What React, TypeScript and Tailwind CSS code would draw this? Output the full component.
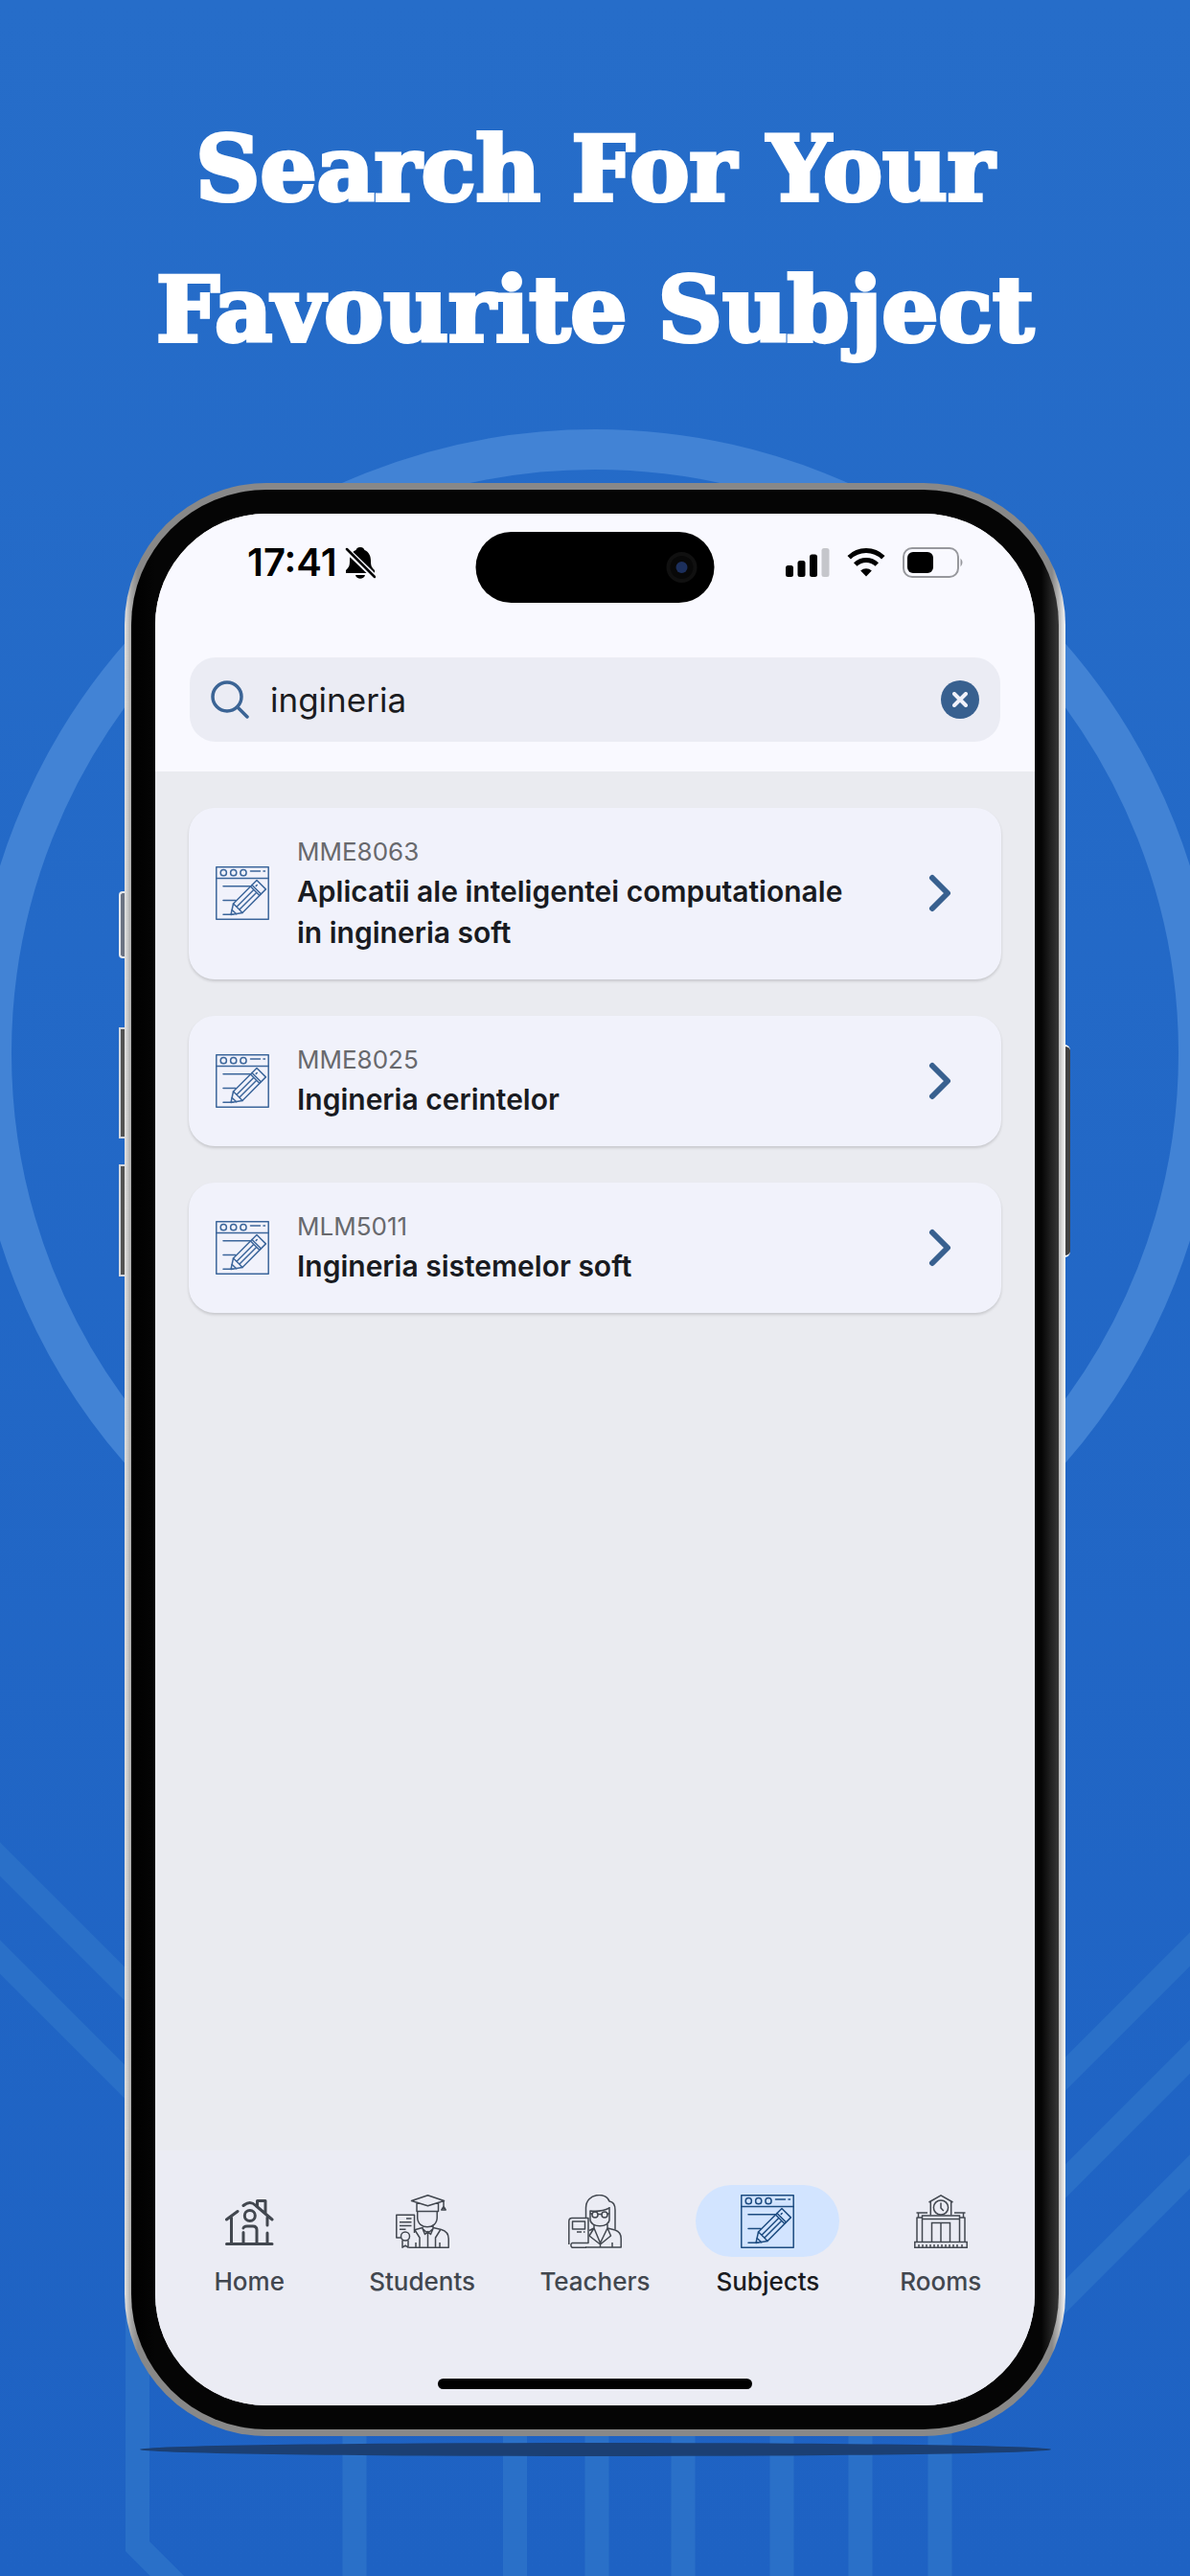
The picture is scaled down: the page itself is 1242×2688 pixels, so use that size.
import React from "react";

type IconProps = { className?: string };

const subjects = [
  { code: "MME8063", title: "Aplicatii ale inteligentei computationale in ingineria soft" },
  { code: "MME8025", title: "Ingineria cerintelor" },
  { code: "MLM5011", title: "Ingineria sistemelor soft" },
];

function SubjectIcon({ className }: IconProps) {
  return (
    <svg viewBox="0 0 56 56" className={className} fill="none" stroke="currentColor" strokeWidth="1.5" strokeLinecap="round" aria-hidden="true">
      <path d="M.8.8h54.4v54.4H.8z" strokeLinejoin="round" />
      <path d="M.8 12.5h54.4" />
      <circle cx="8.3" cy="6.7" r="3.1" />
      <circle cx="18.7" cy="6.7" r="3.1" />
      <circle cx="29" cy="6.7" r="3.1" />
      <path d="M36.5 5h10M50 5h1.5M8 20.7h28M8 35.5h13M8 50.3h10" />
      <path d="M43 14.5l9.4 9.4L28 48.5 16 50.5 18.5 39z" strokeLinejoin="round" />
      <path d="M36.5 21l9.2 9.2M38 19.500l9.300 9.300M39.500 24.800L22 42.300M42.300 27.800L25 45M18.500 39l3.200 3 3 3 3.300 3.500M17.200 45.500l4.500 4.300M42.300 20.400l.9-.9" />
    </svg>
  );
}

function HomeIcon({ className }: IconProps) {
  return (
    <svg viewBox="0 0 56 56" className={className} fill="none" stroke="currentColor" strokeWidth="3" strokeLinecap="round" strokeLinejoin="round" aria-hidden="true">
      <path d="M4.500 51.500h47.500M9.500 50V24M4.500 26l11.500-8.500M22 11.500q7-6 13 0l17 14.500M47 24v8M47 40v11M36.500 12V6.500h8.500V19" />
      <circle cx="28.800" cy="22" r="5.500" />
      <path d="M22 50V39.500M22 35q.5-2 4-2h6q4 0 4 4v13" />
    </svg>
  );
}

function StudentIcon({ className }: IconProps) {
  return (
    <svg viewBox="0 0 56 56" className={className} fill="none" stroke="currentColor" strokeWidth="1.5" strokeLinejoin="round" aria-hidden="true">
      <path d="M16.500 6.500l17-5.800 17 5.800-17 5.300zM22 8.500v9h22.500v-9M50 6.500v6M50 12.500l-2.200 3.500h4.400z" />
      <path d="M22.700 17.500v6.500c0 13 20.500 13 20.500 0v-6.500M28 32.500v3l5.500 5 5.500-5v-3M28 35.500l2.500 6 3-3 3 3 2.500-6" />
      <path d="M28 34.500l-9 2.500M39 34.500l8.500 2c5 1.500 7.700 5 7.700 9.500v9.200H13.500M20 37l5 8v10M46.500 37l-5 8v10M33.500 40.500V55M46 50v5M21 50v5" />
      <path d="M5.500 45H.8V21.200h18.700V40M11 25h5.500M4 28.800h12.500M4 32.600h12.500M4 36.300h6.500" />
      <circle cx="10" cy="43.500" r="4.500" />
      <path d="M7 47.500v7.700l3-2 3 2v-7.700" />
    </svg>
  );
}

function TeacherIcon({ className }: IconProps) {
  return (
    <svg viewBox="0 0 56 56" className={className} fill="none" stroke="currentColor" strokeWidth="1.500" strokeLinejoin="round" aria-hidden="true">
      <path d="M18.500 24V14C18.500-2 40-3 43 7c4 .5 6 4 6 9v20.500M23 24v-7c8 1 14 0 20-3M43 13v13c0 9-20 9-20 0v-9" />
      <circle cx="28" cy="21" r="3" />
      <circle cx="38" cy="21" r="3" />
      <path d="M31 20.500h4M25 20.500l-2-1M41 20.500l2-1M27 31v4l6.500 15.500L41 35v-4M41 35l8 2c4.500 1.500 6.200 5 6.200 9v9H18M27 35l-5 2.500M27 35l-5 8 11.500 9 11-9L41 35M33.500 50v5M46 50v5" />
      <path d="M4 24.500h17v26H4a3 3 0 0 0 0 4.700h15M4 24.500Q.8 24.500.8 28v24M4.500 28h13v8h-13zM9 39h5M16 39h1.500" />
    </svg>
  );
}

function RoomsIcon({ className }: IconProps) {
  return (
    <svg viewBox="0 0 56 56" className={className} fill="none" stroke="currentColor" strokeWidth="1.500" aria-hidden="true">
      <path d="M15.500 8L28 .9 40.500 8M17.300 7v14.500M38.700 7v14.500" />
      <circle cx="28" cy="13.500" r="7.600" />
      <path d="M28 8.500v5.500l2.800 3" />
      <path d="M2.500 19h11.500M42 19h11.500M4.500 19v4.500M51.500 19v4.500M8.500 22h39v3.500h-39zM2.500 24h6M47.500 24h6M3 24v25M8.500 25.500V49M53 24v25M47.500 25.500V49" />
      <path d="M18.500 49V29.500h19V49M28 29.500V49M.8 49.500h54.400v5.700H.8z" />
      <path d="M5 52v3M9 52v3M13 52v3M17 52v3M21 52v3M25 52v3M29 52v3M33 52v3M37 52v3M41 52v3M45 52v3M50 52v3" />
    </svg>
  );
}

const tabs = [
  { label: "Home", Icon: HomeIcon },
  { label: "Students", Icon: StudentIcon },
  { label: "Teachers", Icon: TeacherIcon },
  { label: "Subjects", Icon: SubjectIcon, active: true },
  { label: "Rooms", Icon: RoomsIcon },
];

function Backdrop() {
  return (
    <svg viewBox="0 0 1242 2688" preserveAspectRatio="xMidYMin slice" className="absolute inset-0 h-full w-full" fill="none" aria-hidden="true">
      <circle cx="621" cy="1099" r="630" stroke="#4283d5" strokeWidth="42" />
      <g stroke="#2a70c8" strokeWidth="25">
        <path d="M-20 1920L180 2120M-20 2022L180 2222" />
        <path d="M1262 2014L1062 2214M1262 2126L1062 2326M1262 2246L1062 2446" />
        <path d="M143.500 2400v257l60 60M370 2500v200M537.500 2500v200M623 2500v200M713 2500v200M816 2500v200M898 2500v200M981 2500v200" />
      </g>
    </svg>
  );
}

function StatusBar() {
  return (
    <div className="flex h-[150px] items-start justify-between pt-[19px] pr-[73px] pl-24">
      <div className="flex h-16 items-center gap-2 text-[40px] leading-none font-semibold text-black">
        <span>17:41</span>
        <svg viewBox="0 0 32 34" className="h-[34px] w-8" aria-hidden="true">
          <path fill="#000" d="M16 1c3 0 4 1.500 4.500 3C25 6 27 10 27 15c0 6 1 7 4 10v3H1v-3c3-3 4-4 4-10 0-5 2-9 6.500-11C12 2.500 13 1 16 1zM11 30h10c-1 5-9 5-10 0z" />
          <path stroke="#f9f9ff" strokeWidth="6" d="M1 3l30 29" />
          <path stroke="#000" strokeWidth="2.500" strokeLinecap="round" d="M2 3l29 29" />
        </svg>
      </div>
      <div className="flex h-16 items-center gap-[18px]">
        <svg viewBox="0 0 46 30" className="h-[30px] w-[46px]" aria-hidden="true">
          <rect x="0" y="18" width="8" height="12" rx="2.500" />
          <rect x="12.500" y="13" width="8" height="17" rx="2.500" />
          <rect x="25" y="6.500" width="8" height="23.500" rx="2.500" />
          <rect x="37.500" y="0" width="8" height="30" rx="2.500" fill="#c5c6cb" />
        </svg>
        <svg viewBox="0 0 40 30" className="h-[30px] w-10" fill="none" stroke="#000" strokeWidth="5" aria-hidden="true">
          <path d="M2.200 9.800a25.500 25.500 0 0 1 35.600 0M8.700 17a16.500 16.500 0 0 1 22.600 0" />
          <path d="M20 29.500l-5.800-6a8.500 8.500 0 0 1 11.600 0z" fill="#000" stroke="none" />
        </svg>
        <svg viewBox="0 0 65 32" className="h-8 w-[65px]" aria-hidden="true">
          <rect x="1" y="1" width="57" height="30" rx="9" fill="none" stroke="#97989d" strokeWidth="2" />
          <rect x="5" y="5" width="27" height="22" rx="6" />
          <path d="M60.500 11.500q4 4.500 0 9z" fill="#97989d" />
        </svg>
      </div>
    </div>
  );
}

export default function App() {
  return (
    <main className="relative flex min-h-screen flex-col items-center overflow-hidden bg-linear-to-b from-[#266dc9] to-[#1e62c3] pt-[103px] font-['Inter','Noto_Sans',sans-serif]">
      <Backdrop />
      <h1 className="relative text-center font-['DejaVu_Serif',serif] text-[93px] leading-[147px] font-bold text-white [-webkit-text-stroke:4px_white]">
        Search For Your
        <br />
        Favourite Subject
      </h1>

      <div className="relative mt-[107px] w-full max-w-[982px]">
        <div className="absolute top-[426px] -left-[6px] h-[70px] w-2 rounded-l-sm border-2 border-r-0 border-gray-200 bg-gray-500" />
        <div className="absolute top-[568px] -left-[6px] h-[116px] w-2 border-2 border-r-0 border-gray-300 bg-neutral-600" />
        <div className="absolute top-[711px] -left-[6px] h-[117px] w-2 border-2 border-r-0 border-gray-300 bg-neutral-600" />
        <div className="absolute top-[586px] -right-[5px] h-[222px] w-2 rounded-r-md border-y-2 border-white bg-neutral-700" />

        <div className="relative rounded-[148px] bg-[linear-gradient(to_right,#e4e4e4,#a8a8a8_7px,#888888_14px,#888888_calc(100%-14px),#b8b8b8_calc(100%-7px),#f8f8f8)] p-[7px]">
          <div className="rounded-[141px] bg-[linear-gradient(to_right,#000000,#050505_25px,#050505_calc(100%-18px),#383838)] p-[25px]">
            <div className="relative flex min-h-[1974px] flex-col overflow-hidden rounded-[116px] bg-[#eaebf0]">
              <div className="absolute top-[19px] left-1/2 flex h-[74px] w-[249px] -translate-x-1/2 items-center justify-end rounded-full bg-black pr-[18px]">
                <span className="flex size-8 items-center justify-center rounded-full border-4 border-[#101010] bg-[#080808]">
                  <span className="size-3 rounded-full bg-[#1c2f5c]" />
                </span>
              </div>

              <header className="bg-[#f9f9ff] pb-[31px]">
                <StatusBar />
                <form className="mx-9 flex h-[88px] items-center rounded-[27px] bg-[#ebecf4] px-[22px]" onSubmit={(e) => e.preventDefault()}>
                  <svg viewBox="0 0 40 40" className="size-10 shrink-0" fill="none" stroke="#3b6495" strokeWidth="3.500" strokeLinecap="round" aria-hidden="true">
                    <circle cx="17" cy="17" r="15" />
                    <path d="M28 28l10 10" />
                  </svg>
                  <input
                    type="text"
                    aria-label="Search subjects"
                    defaultValue="ingineria"
                    className="ml-[22px] min-w-0 flex-1 bg-transparent text-[35px] text-[#1b1c21] outline-none"
                  />
                  <button type="button" aria-label="Clear search" className="flex size-10 items-center justify-center rounded-full bg-[#38608f]">
                    <svg viewBox="0 0 16 16" className="size-4" stroke="#f0f1fa" strokeWidth="4" strokeLinecap="round" aria-hidden="true">
                      <path d="M2 2l12 12M14 2L2 14" />
                    </svg>
                  </button>
                </form>
              </header>

              <section className="flex flex-1 flex-col gap-[38px] px-[35px] pt-[38px]">
                {subjects.map((s) => (
                  <a key={s.code} href="#subject" className="flex items-center rounded-[27px] bg-[#f1f2fb] pt-[26px] pr-[52px] pb-[27px] pl-7 shadow-[0_2px_3px_rgba(0,0,0,0.15)]">
                    <SubjectIcon className="size-14 shrink-0 text-[#3c669b]" />
                    <span className="ml-[29px] flex flex-1 flex-col">
                      <span className="text-[26px] leading-10 text-[#68696d]">{s.code}</span>
                      <span className="text-[30px] leading-[43px] font-semibold text-[#191b21]">{s.title}</span>
                    </span>
                    <svg viewBox="0 0 24 40" className="ml-16 h-10 w-6 shrink-0" fill="none" stroke="#38608f" strokeWidth="6" strokeLinecap="round" strokeLinejoin="round" aria-hidden="true">
                      <path d="M4 4l16 16L4 36" />
                    </svg>
                  </a>
                ))}
              </section>

              <nav className="bg-[#ebecf4] px-2 pt-9 pb-[17px]">
                <div className="grid grid-cols-5">
                  {tabs.map(({ label, Icon, active }) => (
                    <button key={label} type="button" className="flex flex-col items-center gap-2">
                      <span className={active ? "flex h-[75px] w-[150px] items-center justify-center rounded-full bg-[#d2e4ff] text-[#1d4c80]" : "flex h-[75px] w-[150px] items-center justify-center text-[#42474f]"}>
                        <Icon className="size-14" />
                      </span>
                      <span className={active ? "text-[26px] leading-9 font-medium text-[#191b21]" : "text-[26px] leading-9 font-medium text-[#42474f]"}>{label}</span>
                    </button>
                  ))}
                </div>
                <div className="mx-auto mt-[83px] h-[11px] w-[328px] rounded-full bg-black" />
              </nav>
            </div>
          </div>
        </div>
      </div>
      <div className="relative mt-[7px] mb-[124px] h-[14px] w-[951px] rounded-[50%] bg-[#1b3f73]" />
    </main>
  );
}
